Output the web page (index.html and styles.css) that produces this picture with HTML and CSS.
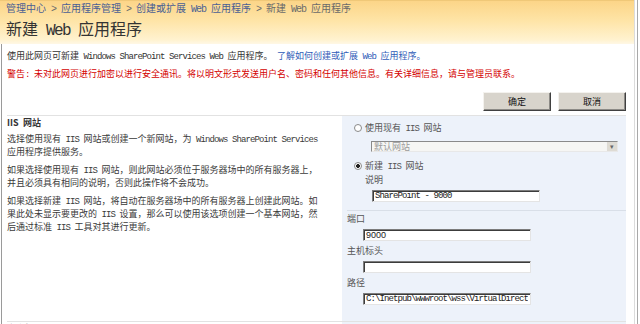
FILE: index.html
```html
<!DOCTYPE html>
<html lang="zh-CN">
<head>
    <meta charset="UTF-8">
    <title>新建 Web 应用程序</title>
    <link rel="stylesheet" href="styles.css">
</head>
<body>

<div class="page">
    <header class="title-area">
        <div class="crumbs">
            <a href="#">管理中心</a><span class="en"> &gt; </span><a href="#">应用程序管理</a><span class="en"> &gt; </span><a href="#">创建或扩展<span class="en"> Web </span>应用程序</a><span class="en"> &gt; </span>新建<span class="en"> Web </span>应用程序
        </div>
        <h1>新建<span class="en"> Web </span>应用程序</h1>
    </header>

    <div class="content">
        <p class="intro">使用此网页可新建<span class="en"> Windows SharePoint Services Web </span>应用程序。<span class="en"> </span><a href="#">了解如何创建或扩展<span class="en"> Web </span>应用程序。</a></p>
        <p class="warn">警告<span class="en">: </span>未对此网页进行加密以进行安全通讯。将以明文形式发送用户名、密码和任何其他信息。有关详细信息，请与管理员联系。</p>

        <div class="actions">
            <button type="button">确定</button>
            <button type="button">取消</button>
        </div>

        <!-- IIS site section -->
        <div class="section">
            <div class="section-desc">
                <h3>IIS<span class="en"> </span>网站</h3>
                <p>选择使用现有<span class="en"> IIS </span>网站或创建一个新网站，为<span class="en"> Windows SharePoint Services </span><br>应用程序提供服务。</p>
                <p>如果选择使用现有<span class="en"> IIS </span>网站，则此网站必须位于服务器场中的所有服务器上，<br>并且必须具有相同的说明，否则此操作将不会成功。</p>
                <p>如果选择新建<span class="en"> IIS </span>网站，将自动在服务器场中的所有服务器上创建此网站。如<br>果此处未显示要更改的<span class="en"> IIS </span>设置，那么可以使用该选项创建一个基本网站，然<br>后通过标准<span class="en"> IIS </span>工具对其进行更新。</p>
            </div>
            <div class="section-form">
                <label class="opt"><input type="radio" name="site"><span>使用现有<span class="en"> IIS </span>网站</span></label>
                <div class="select">
                    <span class="select-value">默认网站</span>
                    <span class="select-arrow">&#9662;</span>
                </div>
                <label class="opt opt-new"><input type="radio" name="site" checked><span>新建<span class="en"> IIS </span>网站</span></label>
                <label class="field-label sub" for="desc">说明</label>
                <input class="text sub mono" id="desc" type="text" value="SharePoint - 9000">

                <div class="divider"></div>

                <label class="field-label" for="port">端口</label>
                <input class="text" id="port" type="text" value="9000">
                <label class="field-label" for="host">主机标头</label>
                <input class="text" id="host" type="text" value="">
                <label class="field-label" for="path">路径</label>
                <input class="text mono" id="path" type="text" value="C:\Inetpub\wwwroot\wss\VirtualDirectories\9000">
            </div>
        </div>

        <div class="section">
            <div class="section-desc">
                <h3>安全性配置</h3>
            </div>
            <div class="section-form"></div>
        </div>
    </div>
</div>

</body>
</html>
```

FILE: styles.css
```css
body {
    margin: 0;
    font-family: 'Noto Sans CJK SC', sans-serif;
    font-size: 9px;
    line-height: 12px;
    color: #444;
    background-color: #fff;
    overflow: hidden;
}

a {
    text-decoration: none;
}

.en {
    font-family: 'Liberation Mono', monospace;
    letter-spacing: -0.1em;
}

.page {
    width: 634px;
    border-right: 1px solid #dcdcdc;
    box-shadow: 2px 0 0 #fff, 3px 0 0 #a9a9a9;
    min-height: 330px;
}

.title-area {
    height: 42px;
    padding: 1px 0 0 6px;
    border-top: 1px solid #f0c878;
    background: linear-gradient(#fcd588, #fee4a6 45%, #fff2cf 90%, #fff8e6);
}

.crumbs {
    font-size: 10px;
    line-height: 12px;
    color: #6a6a6a;
}

.crumbs a {
    color: #4a5f94;
}

h1 {
    margin: 2px 0 0;
    font-size: 16px;
    line-height: 20px;
    font-weight: normal;
    color: #333;
}

.content {
    margin-left: 1px;
    border-left: 1px solid #9a9a9a;
    padding: 6px 8px 0 5px;
}

.intro {
    margin: 0;
    color: #333;
}

.intro a {
    color: #2f5cb8;
}

.warn {
    margin: 5px 0 0;
    color: #d40000;
}

.actions {
    display: flex;
    justify-content: flex-end;
    gap: 7px;
    margin-top: 11px;
}

.actions button {
    width: 68px;
    height: 19px;
    padding: 0;
    font-family: 'Noto Sans CJK SC', sans-serif;
    font-size: 9px;
    color: #111;
    background-color: #d8d4cc;
    border: 1px solid;
    border-color: #f4f2ee #404040 #404040 #f4f2ee;
    box-shadow: inset -1px -1px 0 #8c8a86;
}

.section {
    display: grid;
    grid-template-columns: 335px 1fr;
    margin-top: 4px;
    border-top: 1px solid #e2e2e2;
}

.section + .section {
    margin-top: 0;
}

.section-desc {
    padding: 1px 0 0 0;
}

.section-desc h3 {
    margin: 0;
    font-size: 9px;
    line-height: 12px;
    font-weight: bold;
    color: #333;
}

.section-desc p {
    margin: 3px 0 6px;
    color: #3a3a3a;
}

.section-desc p + p {
    margin-top: 0;
}

.section-form {
    display: flex;
    flex-direction: column;
    align-items: flex-start;
    padding: 6px 0 16px 5px;
    background-color: #edf2fa;
}

.opt {
    display: flex;
    align-items: center;
    height: 12px;
    margin-left: 7px;
    color: #555;
}

.opt input {
    appearance: none;
    width: 8px;
    height: 8px;
    margin: 0 3px 0 0;
    border: 1px solid #8a8a8a;
    border-radius: 50%;
    background-color: #fff;
}

.opt input:checked {
    background: radial-gradient(circle, #222 0 1.6px, #fff 2.2px);
}

.opt-new {
    margin-top: 8px;
}

.select {
    display: flex;
    width: 247px;
    height: 11px;
    margin: 7px 0 0 24px;
    box-sizing: border-box;
    border: 1px solid;
    border-color: #8a8a8a #e8e8e8 #e8e8e8 #8a8a8a;
    background-color: #f6f6f4;
}

.select-value {
    flex: 1;
    padding-left: 2px;
    line-height: 9px;
    color: #9a9a9a;
}

.select-arrow {
    width: 10px;
    font-size: 7px;
    line-height: 9px;
    text-align: center;
    color: #666;
    background-color: #dedbd4;
    border-left: 1px solid #f4f4f4;
}

.field-label {
    display: block;
    height: 12px;
    margin-top: 4px;
    color: #555;
}

.field-label.sub {
    margin: 2px 0 0 18px;
}

.text {
    width: 168px;
    height: 12px;
    margin: 4px 0 0 16px;
    padding: 0 2px;
    box-sizing: border-box;
    font-family: 'Liberation Sans', sans-serif;
    font-size: 9px;
    color: #222;
    background-color: #fff;
    border: 1px solid;
    border-color: #7c7c7c #e4e4e4 #e4e4e4 #7c7c7c;
    box-shadow: inset 1px 1px 0 #3c3c3c;
    outline: none;
}

.text.sub {
    margin-left: 25px;
}

.text.mono {
    font-family: 'Liberation Mono', monospace;
    letter-spacing: -0.1em;
}

.divider {
    align-self: stretch;
    height: 1px;
    margin: 8px 0 1px 0;
    background-color: #d9dfe8;
}

.divider + .field-label {
    margin-top: 1px;
}
```
